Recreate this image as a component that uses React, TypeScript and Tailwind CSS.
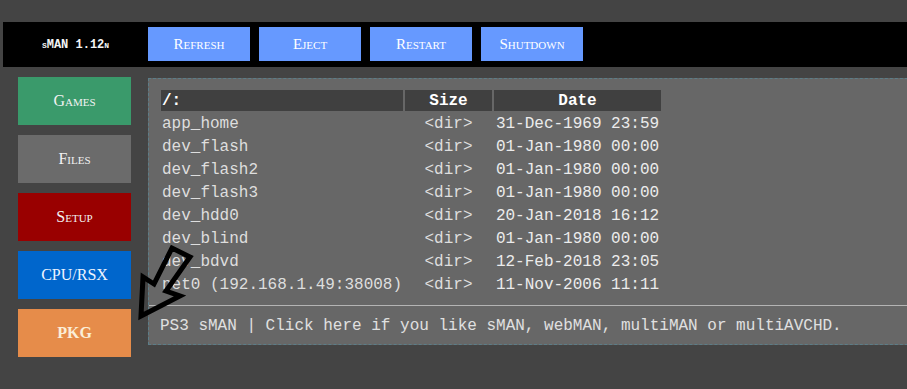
import React from "react";

const rows: [string, string, string][] = [
  ["app_home", "<dir>", "31-Dec-1969 23:59"],
  ["dev_flash", "<dir>", "01-Jan-1980 00:00"],
  ["dev_flash2", "<dir>", "01-Jan-1980 00:00"],
  ["dev_flash3", "<dir>", "01-Jan-1980 00:00"],
  ["dev_hdd0", "<dir>", "20-Jan-2018 16:12"],
  ["dev_blind", "<dir>", "01-Jan-1980 00:00"],
  ["dev_bdvd", "<dir>", "12-Feb-2018 23:05"],
  ["net0 (192.168.1.49:38008)", "<dir>", "11-Nov-2006 11:11"],
];

const serif = { fontFamily: '"Liberation Serif", "Times New Roman", serif' };
const mono = { fontFamily: '"Liberation Mono", "Courier New", monospace' };

export default function App() {
  return (
    <div className="relative w-[907px] h-[389px] overflow-hidden bg-[#444444] pt-[22px] pl-[3px]">
      {/* header */}
      <div className="flex h-[45px] w-[920px] bg-black">
        <div
          className="w-[145px] shrink-0 flex items-center justify-center text-[12px] font-bold text-[#f4f4f4] [font-variant:small-caps]"
          style={mono}
        >
          sMAN 1.12n
        </div>
        <div className="flex gap-[9px] pt-[5px]">
          {["Refresh", "Eject", "Restart", "Shutdown"].map((t) => (
            <div
              key={t}
              className="w-[102px] h-[34px] shrink-0 bg-[#6699ff] flex items-center justify-center text-[15px] text-white [font-variant:small-caps]"
              style={serif}
            >
              {t}
            </div>
          ))}
        </div>
      </div>

      <div className="flex mt-[10px] w-[1000px]">
        {/* sidebar */}
        <div className="ml-[15px] w-[113px] shrink-0 flex flex-col gap-[10px]">
          {[
            { t: "Games", bg: "bg-[#3a9a6b]", c: "text-[#f2f2f2]", b: "" },
            { t: "Files", bg: "bg-[#6b6b6b]", c: "text-[#f2f2f2]", b: "" },
            { t: "Setup", bg: "bg-[#990000]", c: "text-[#f2f2f2]", b: "" },
            { t: "CPU/RSX", bg: "bg-[#0066cc]", c: "text-[#eef4ff]", b: "" },
            { t: "PKG", bg: "bg-[#e68c4a]", c: "text-[#fbeed8]", b: "font-bold" },
          ].map((x) => (
            <div
              key={x.t}
              className={`h-[48px] flex items-center justify-center text-[16px] [font-variant:small-caps] ${x.bg} ${x.c} ${x.b}`}
              style={serif}
            >
              {x.t}
            </div>
          ))}
        </div>

        {/* panel */}
        <div className="ml-[17px] mt-[1px] w-[800px] shrink-0 h-[267px] bg-[#676767] border border-dashed border-[#5b7d88] pt-[11px]">
          <div className="pl-[12px]" style={mono}>
            <div className="grid grid-cols-[242px_87px_167px] gap-x-[2px] gap-y-[2px] text-[16px] text-[#dedede]">
              <div className="h-[21px] bg-[#404040] font-bold text-white flex items-center pl-[1px]">/:</div>
              <div className="h-[21px] bg-[#404040] font-bold text-white flex items-center justify-center">Size</div>
              <div className="h-[21px] bg-[#404040] font-bold text-white flex items-center justify-center">Date</div>
              {rows.map(([a, b, c]) => (
                <React.Fragment key={a}>
                  <div className="h-[21px] flex items-center pl-[1px] whitespace-nowrap">{a}</div>
                  <div className="h-[21px] flex items-center justify-center">{b}</div>
                  <div className="h-[21px] flex items-center justify-center text-[#ececec]">{c}</div>
                </React.Fragment>
              ))}
            </div>
          </div>
          <div className="mt-[10px] h-px bg-[#b4b4b4]" />
          <div className="pl-[11px] pt-[8px] text-[16px] text-[#e0e0e0] whitespace-nowrap" style={mono}>
            PS3 sMAN | Click here if you like sMAN, webMAN, multiMAN or multiAVCHD.
          </div>
        </div>
      </div>

      {/* annotation arrow */}
      <svg className="absolute left-0 top-0 pointer-events-none" width="907" height="389">
        <polygon
          points="141,316 143,277 154,284 172,248 190,257 166,291 180,296"
          fill="none"
          stroke="#000"
          strokeWidth="5"
          strokeLinejoin="miter"
        />
      </svg>
    </div>
  );
}
